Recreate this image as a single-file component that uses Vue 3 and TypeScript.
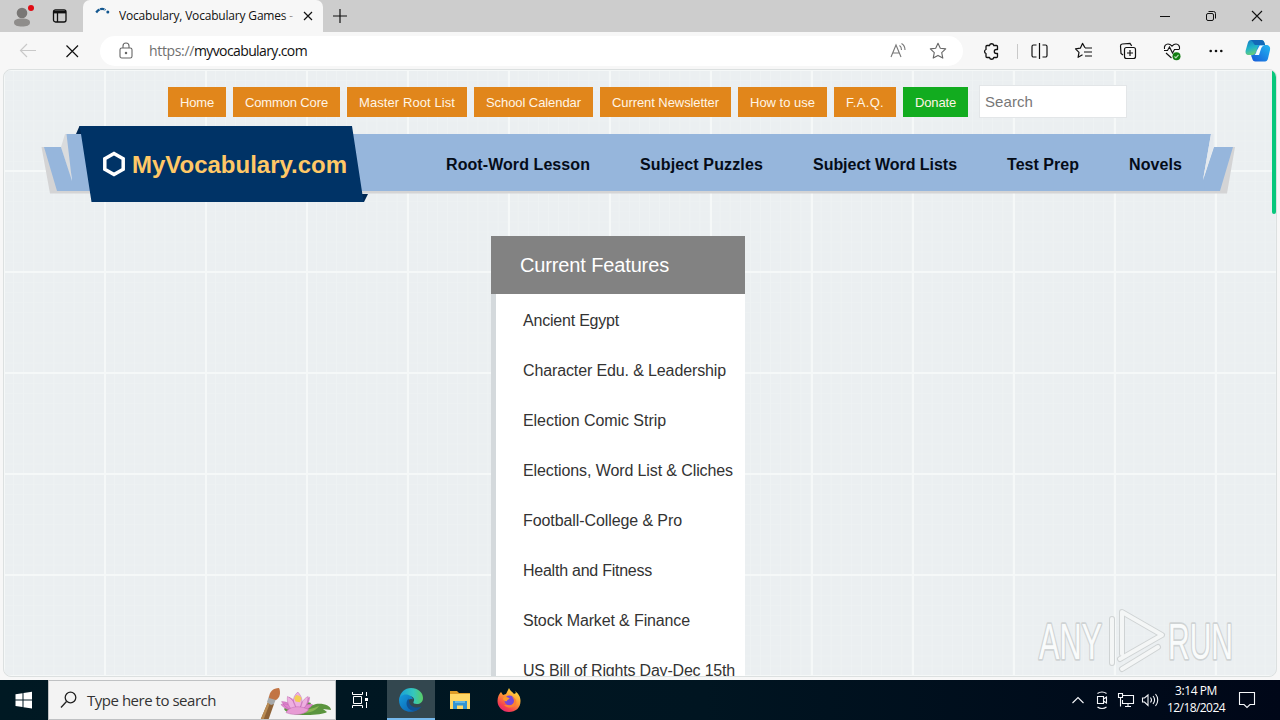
<script setup lang="ts">
import type { Directive } from 'vue'

interface Entry {
  label: string
  width: number
}

/** Spreads a label's letters so that it fills the given width in pixels. */
const vFit: Directive<HTMLElement, number> = {
  mounted(el, binding) {
    const natural = el.getBoundingClientRect().width
    const count = (el.textContent ?? '').length
    if (count > 0) el.style.letterSpacing = `${(binding.value - natural) / count}px`
  },
}

const shortcuts: Entry[] = [
  { label: 'Home', width: 34 },
  { label: 'Common Core', width: 83 },
  { label: 'Master Root List', width: 96 },
  { label: 'School Calendar', width: 95 },
  { label: 'Current Newsletter', width: 107 },
  { label: 'How to use', width: 65 },
  { label: 'F.A.Q.', width: 38 },
  { label: 'Donate', width: 41 },
]

const sections: Entry[] = [
  { label: 'Root-Word Lesson', width: 144 },
  { label: 'Subject Puzzles', width: 123 },
  { label: 'Subject Word Lists', width: 144 },
  { label: 'Test Prep', width: 72 },
  { label: 'Novels', width: 53 },
]

const features: Entry[] = [
  { label: 'Ancient Egypt', width: 96 },
  { label: 'Character Edu. & Leadership', width: 203 },
  { label: 'Election Comic Strip', width: 143 },
  { label: 'Elections, Word List & Cliches', width: 210 },
  { label: 'Football-College & Pro', width: 159 },
  { label: 'Health and Fitness', width: 129 },
  { label: 'Stock Market & Finance', width: 167 },
  { label: 'US Bill of Rights Day-Dec 15th', width: 212 },
]
</script>

<template>
  <div class="screen">
    <header class="tabstrip">
      <div class="corner">
        <svg class="profile" width="24" height="32" viewBox="0 0 24 32">
          <circle cx="12" cy="13" r="5.3" fill="#797775" />
          <path d="M4 22.500c0-3 3-4 8-4s8 1 8 4-3.500 4-8 4-8-1-8-4z" fill="#8f8d8b" />
          <circle cx="21" cy="8" r="3" fill="#e00b14" />
        </svg>
        <svg class="workspace" width="16" height="16" viewBox="0 0 16 16" fill="none" stroke="#111">
          <rect x="1.500" y="1.800" width="12.500" height="12.200" rx="2" stroke-width="1.300" />
          <path d="M1.500 4h12.500" stroke-width="2.800" />
          <path d="M5.500 4v10" stroke-width="1.300" />
        </svg>
      </div>
      <div class="tab">
        <svg class="spinner" width="16" height="16" viewBox="0 0 16 16">
          <path d="M1.200 6.500C4 2.600 7.500 1.900 10.500 4" fill="none" stroke="#12568f" stroke-width="2.200" stroke-dasharray="4.500 .6" />
          <circle cx="12.800" cy="6" r="1.500" fill="#12568f" />
        </svg>
        <span class="tab-title"><span v-fit="174">Vocabulary, Vocabulary Games -</span></span>
        <svg class="tab-close" width="10" height="10" viewBox="0 0 10 10" stroke="#111" stroke-width="1.200"><path d="M1 1l8 8M9 1L1 9" /></svg>
      </div>
      <svg class="new-tab" width="14" height="14" viewBox="0 0 14 14" stroke="#111" stroke-width="1.200"><path d="M7 0v14M0 7h14" /></svg>
      <div class="window-buttons">
        <svg width="46" height="32" viewBox="0 0 46 32" fill="none" stroke="#111"><path d="M18 16.500h10" /></svg>
        <svg width="46" height="32" viewBox="0 0 46 32" fill="none" stroke="#111">
          <rect x="18.500" y="13.500" width="7" height="7" rx="1.500" />
          <path d="M20.500 11.500h5a2 2 0 0 1 2 2v5" />
        </svg>
        <svg width="46" height="32" viewBox="0 0 46 32" fill="none" stroke="#111" stroke-width="1.100"><path d="M18 11l10 10M28 11L18 21" /></svg>
      </div>
    </header>

    <div class="toolbar">
      <svg class="back" width="56" height="36" viewBox="0 0 56 36" fill="none" stroke="#c9c9c9" stroke-width="1.200"><path d="M36 18.500H20.500M27 12l-6.500 6.500L27 25" /></svg>
      <svg class="stop" width="44" height="36" viewBox="0 0 44 36" stroke="#111" stroke-width="1.200"><path d="M10.500 13.500l11.500 11.500M22 13.500L10.500 25" /></svg>
      <div class="address">
        <svg class="lock" width="14" height="18" viewBox="0 0 14 18" fill="none" stroke="#666" stroke-width="1.100">
          <rect x="1" y="6" width="12" height="10" rx="1.800" />
          <path d="M4 6V4a3 3 0 0 1 6 0v2" />
          <circle cx="7" cy="11" r=".7" fill="#666" />
        </svg>
        <span class="url"><span v-fit="45" class="scheme">https://</span><span v-fit="113">myvocabulary.com</span></span>
        <svg class="read" width="18" height="18" viewBox="0 0 18 18" fill="none" stroke="#777" stroke-width="1.100">
          <path d="M2 15L7 3l5 12M4 11h6" />
          <path d="M10.500 3.500c1.500 1 2 2.500 2 4.500M12.500 1.500c2.500 1.500 3.500 3.500 3.500 6.500" />
        </svg>
        <svg class="favourite" width="18" height="18" viewBox="0 0 18 18" fill="none" stroke="#666" stroke-width="1.100" stroke-linejoin="round"><path d="M9 1.300l2.300 5 5.400.6-4 3.700 1.100 5.500L9 13.400l-4.800 2.700 1.100-5.500-4-3.700 5.400-.6z" /></svg>
      </div>
      <div class="actions">
        <svg width="44" height="36" viewBox="0 0 44 36" fill="none" stroke="#111" stroke-width="1.300" stroke-linejoin="round">
          <path d="M19 13.500h2.500a2.200 2.200 0 0 1 4.300 0h2.700a1 1 0 0 1 1 1v3h-1.200a2 2 0 0 0 0 4h1.200v3a1 1 0 0 1-1 1h-2.700a2.200 2.200 0 0 1-4.300 0H19a1 1 0 0 1-1-1v-3a2.100 2.100 0 0 1 0-4v-3a1 1 0 0 1 1-1z" />
        </svg>
        <i class="divider"></i>
        <svg width="44" height="36" viewBox="0 0 44 36" fill="none" stroke="#111" stroke-width="1.200">
          <path d="M21.500 11v16M18.500 13h-3a1.500 1.500 0 0 0-1.500 1.500v9a1.500 1.500 0 0 0 1.500 1.500h3M24.500 13h3a1.500 1.500 0 0 1 1.500 1.500v9a1.500 1.500 0 0 1-1.500 1.500h-3" />
        </svg>
        <svg width="44" height="36" viewBox="0 0 44 36" fill="none" stroke="#111" stroke-width="1.200" stroke-linejoin="round">
          <path d="M23 15.700l-2.500-4.300-2.200 4.800-4.800.6 3.500 3.500-.9 5 4.400-2.500M23 16h7M22 20h8M23 24h7" />
        </svg>
        <svg width="44" height="36" viewBox="0 0 44 36" fill="none" stroke="#111" stroke-width="1.200">
          <path d="M17 23l-2-1.500-.5-7.500a2 2 0 0 1 1.700-2l7.800-.6 1.700 2.500" />
          <rect x="18.500" y="15.500" width="11" height="11" rx="2" />
          <path d="M24 18v6M21 21h6" />
        </svg>
        <svg width="44" height="36" viewBox="0 0 44 36" fill="none" stroke="#111" stroke-width="1.100">
          <path d="M14.500 17c-.6-3 1.200-5 3.500-5 1.800 0 3 1 4 2.200 1-1.200 2.200-2.200 4-2.200 2.300 0 4 2 3.500 5M14 18.500h3.500l2-3.500 3 6 2-3.500h5M16 21l5.500 5" />
          <circle cx="26.500" cy="24.300" r="4" fill="#107c10" stroke="none" />
          <path d="M24.500 24.500l1.400 1.400 2.600-3" stroke="#b9e2b9" />
        </svg>
        <svg width="44" height="36" viewBox="0 0 44 36" fill="#111"><circle cx="16.700" cy="19" r="1.300" /><circle cx="22" cy="19" r="1.300" /><circle cx="27.300" cy="19" r="1.300" /></svg>
        <svg width="42" height="36" viewBox="0 0 42 36">
          <defs>
            <linearGradient id="copA" x1="0" y1="0" x2=".4" y2="1"><stop offset="0" stop-color="#1578c4" /><stop offset=".55" stop-color="#20b4c9" /><stop offset="1" stop-color="#71cf72" /></linearGradient>
            <linearGradient id="copB" x1="1" y1="0" x2="0" y2="1"><stop offset="0" stop-color="#21b8f2" /><stop offset="1" stop-color="#1757d7" /></linearGradient>
          </defs>
          <path d="M13 8h10c2 0 3 1 3.500 3l.7 2.200c-3 0-4.200 1-5 3.500L20 23H11c-3 0-4-2-3.200-5l2-7c.6-2 1.500-3 3.200-3z" fill="url(#copA)" />
          <path d="M27 29.500H17.500c-2 0-2.800-1-3.300-3L13 23.200c3 0 4.500-1.200 5.300-4L20.200 13H28c3 0 4.700 2 4 5l-2 8.500c-.5 2-1.500 3-3 3z" fill="url(#copB)" />
          <path d="M21.700 13.500h4.800c-2.200.5-3 1.500-3.700 4L21 23h-4.700c1.200-.6 1.800-2 2.300-4z" fill="#f8fbff" />
          <path d="M13 8h10c2 0 3 1 3.500 3l.6 2H20c-2.500 0-4 .5-4.700-2.500z" fill="#1268b7" />
        </svg>
      </div>
    </div>

    <main class="page">
      <div class="viewport">
        <nav class="shortcuts">
          <a v-for="item in shortcuts" :key="item.label" :class="{ donate: item.label === 'Donate' }"><span v-fit="item.width">{{ item.label }}</span></a>
          <div class="search"><span v-fit="48">Search</span></div>
        </nav>

        <div class="ribbon">
          <svg class="ribbon-shape" width="1200" height="80" viewBox="40 124 1200 80">
            <path d="M41.500 147H50l10 44h1158l13-44h4l-8 46.500H50z" fill="#d4d4d5" />
            <path d="M65 134h6v46l-10-33z" fill="#d9dbdd" />
            <path d="M44 147h17l11 34-5.500-47H1211l-8 46 11-33h19l-13 44H57z" fill="#96b6dc" />
            <path d="M1211 134l2.500 0 0 13-10.500 33z" fill="#e4e9ee" />
            <path d="M76 134l3.500-8H100v8z" fill="#002853" />
            <path d="M361 194h7l-4 8h-8z" fill="#002853" />
            <path d="M79.500 126H352l10.500 69 1.500 7H91.500L81 134z" fill="#003366" />
          </svg>
          <div class="brand">
            <svg width="24" height="26" viewBox="0 0 24 26" fill="none" stroke="#fff" stroke-width="3.500"><path d="M12 2.500l9.200 5.300v10.400L12 23.500l-9.200-5.300V7.800z" /></svg>
            <span v-fit="215">MyVocabulary.com</span>
          </div>
          <nav class="sections">
            <a v-for="item in sections" :key="item.label" v-fit="item.width">{{ item.label }}</a>
          </nav>
        </div>

        <aside class="features">
          <h2><span v-fit="149">Current Features</span></h2>
          <ul>
            <li v-for="item in features" :key="item.label"><span v-fit="item.width">{{ item.label }}</span></li>
          </ul>
        </aside>
        <i class="progress"></i>
        <svg class="watermark" width="216" height="72" viewBox="1034 605 216 72">
          <g font-family="'Liberation Sans',Arial,sans-serif" font-size="50" fill="#f9fbfb" stroke-linejoin="round">
            <g stroke="#cfd3d4" stroke-width="3.500">
              <text x="1039" y="659" textLength="63" lengthAdjust="spacingAndGlyphs" paint-order="stroke">ANY</text>
              <text x="1168" y="659" textLength="65" lengthAdjust="spacingAndGlyphs" paint-order="stroke">RUN</text>
            </g>
          </g>
          <g fill="none" stroke-linejoin="round" stroke-linecap="round">
            <path d="M1112 619v44M1122 654v-42l40 23-42 24M1122 669l36-22" stroke="#cfd3d4" stroke-width="6" />
            <path d="M1112 619v44M1122 654v-42l40 23-42 24M1122 669l36-22" stroke="#f4f6f6" stroke-width="4" />
          </g>
        </svg>
      </div>
    </main>

    <footer class="taskbar">
      <svg class="start" width="48" height="40" viewBox="0 0 48 40" fill="#fff"><path d="M15.500 14.200l7-1v6.400h-7zM23.500 13l8.500-1.200v7.800h-8.500zM15.500 20.600h7V27l-7-1zM23.500 20.600H32v7.800l-8.500-1.200z" /></svg>
      <div class="task-search">
        <svg class="magnifier" width="18" height="18" viewBox="0 0 18 18" fill="none" stroke="#222" stroke-width="1.300"><circle cx="10.500" cy="6.500" r="5.300" /><path d="M6.500 10.500L1 16.500" /></svg>
        <span v-fit="129">Type here to search</span>
        <svg class="lotus" width="76" height="38" viewBox="259 681 76 38">
          <path d="M260 721l8-19 6 2-6 17z" fill="#8d6237" />
          <path d="M260 721l8-19 2 1-7 18z" fill="#b98b53" />
          <path d="M267 702l2-6 7 3-2 5-3 1z" fill="#a6a9aa" />
          <path d="M269 698c0-6 4-10 10-10 2 4 1 10-3 12z" fill="#c27444" />
          <path d="M284 709c3-5 19-9 27-6l-1 3 6-2c8-1 15 2 15 6l-8-1 4 3c-6 4-40 5-43-3z" fill="#5a943e" />
          <path d="M286 710c12 2 27-1 33-4-3 6-14 8-26 8z" fill="#86b552" />
          <g transform="translate(79.500 189.300) scale(.735)">
            <g fill="#df85cd" stroke="#b85caa" stroke-width=".6">
              <path d="M292 708c-9 2-14-3-18-7 7-2 13 0 18 7zM298 708c-9-5-13-10-13-17 7 3 12 8 13 17zM299 708c1-8 7-13 14-17 0 8-5 13-14 17zM293 709c-9-1-15-6-18-12 8 0 15 4 18 12zM298 708c4-6 12-8 19-7-4 7-11 9-19 7z" />
              <path d="M298 708c-9-7-9-17-1-24 7 7 8 17 1 24zM292 710c-8-5-10-13-9-20 6 3 12 10 12 20zM300 710c0-8 3-16 11-20 0 9-3 15-11 20z" fill="#eeafe0" />
              <path d="M281 712c3-6 10-8 16-8 6 0 11 2 15 4-7 8-21 8-31 4z" fill="#e79bd4" />
            </g>
            <path d="M292 692l3-4 4 1 3 3-2 6-6-1z" fill="#f2ce54" />
          </g>
        </svg>
      </div>
      <svg class="task" width="48" height="40" viewBox="0 0 48 40" fill="none" stroke="#fff"><path d="M16.500 12v2.500h10V12M16.500 28v-2.500h10V28M17.500 16.500h8v7h-8zM30.500 12v4M30.500 22v6" /><path d="M29 19.500h3" stroke-width="3" /></svg>
      <div class="task active">
        <svg width="24" height="24" viewBox="0 0 24 24">
          <defs>
            <linearGradient id="edgeTop"><stop stop-color="#179fd9" /><stop offset=".6" stop-color="#35c7bd" /><stop offset="1" stop-color="#59cd65" /></linearGradient>
            <linearGradient id="edgeLow" x1="0" x2="1" y1="0" y2="1"><stop stop-color="#159bdb" /><stop offset="1" stop-color="#0b5cae" /></linearGradient>
          </defs>
          <path d="M.3 11C1 4.500 6 0 12 0c7 0 12 4.500 12 10 0 4-3 6-6 6-3 0-4-1-3.500-2 1-1.500 1.500-5.500-4.500-6C5 7.500 1 9 .3 11z" fill="url(#edgeTop)" />
          <path d="M0 12c.2-4 5-6.500 9.500-5 2.500.8 4 2.500 4.500 4.500C10 9.500 7 14 9 18c1.500 3.500 6 5 10 3.500C12 26.500 0 23.500 0 12z" fill="url(#edgeLow)" />
          <path d="M9.500 10.500C5.500 15 8 21 13 22.500c4 1 7-.5 9.500-4-4 2-9 1-11-1.500-1.500-2-1.500-4.500-2-6.500z" fill="#115193" />
        </svg>
      </div>
      <div class="task">
        <svg width="24" height="24" viewBox="0 0 24 24">
          <path d="M2 3h7l2 2h11v6H2z" fill="#dd9c27" /><path d="M2 6h20v15H2z" fill="#ffd766" /><path d="M5 13h14v8h-4v-3.500H9V21H5z" fill="#3494d2" /><path d="M7 13h10v2H7z" fill="#65b7e4" />
        </svg>
      </div>
      <div class="task">
        <svg width="26" height="26" viewBox="0 0 26 26">
          <defs><linearGradient id="fox" x1=".8" y1="0" x2=".2" y2="1"><stop stop-color="#ffe943" /><stop offset=".45" stop-color="#ff9632" /><stop offset=".8" stop-color="#f43d51" /><stop offset="1" stop-color="#dc247b" /></linearGradient></defs>
          <path d="M5 5l2 3 3-1 3-6c1 3 4 4 5 6l2-1-1-2c4 3 5.500 6 5.500 10 0 7-5 11-11.500 11S1.500 20 1.500 14C1.500 10 3 7 5 5z" fill="url(#fox)" />
          <circle cx="13.500" cy="13.500" r="5" fill="#7647d8" /><path d="M7 11c3-2 5-1 7 1-2 0-3 1-3 2-2 1-4-1-4-3z" fill="#ff9a29" />
          <path d="M12 18c3 1 6-1 6-4 0-2-1-3-2-4 4 1 5 4 4 7-2 4-8 5-12 1z" fill="#fd8130" />
        </svg>
      </div>
      <div class="tray">
        <svg width="24" height="24" viewBox="0 0 24 24"><path d="M6.500 15l5.500-5.500 5.500 5.500" /></svg>
        <svg width="24" height="24" viewBox="0 0 24 24"><path d="M7.500 5.500c2.500-2 6.500-2 9 0M7.500 19c2.500 2 6.500 2 9 0M7.500 8.500h6v7h-6zM13.500 11l3-2v6l-3-2" /></svg>
        <svg width="24" height="24" viewBox="0 0 24 24"><path d="M9 7.500h10.500v8H8.500V12M4.500 5.500h4v4h-4zM6.500 9.500v9M11 18.500h6M14 15.500v3" /></svg>
        <svg width="24" height="24" viewBox="0 0 24 24"><path d="M4.500 10h2l3.500-3v10.500L6.500 14h-2zM12.500 9.500c1.200 1.500 1.200 3.500 0 5M15 8c2 2.500 2 5.500 0 8M17.500 6c3 3.500 3 8.500 0 12" /></svg>
        <div class="clock"><span v-fit="42">3:14 PM</span><span v-fit="58">12/18/2024</span></div>
        <svg class="notice" width="46" height="24" viewBox="0 0 46 24"><path d="M15.500 4.500h15v12h-4.500l-3 3-3-3h-4.500z" /></svg>
      </div>
    </footer>
  </div>
</template>

<style>
body { margin: 0; overflow: hidden; }
</style>

<style scoped>
.screen { width: 1280px; height: 720px; display: flex; flex-direction: column; overflow: hidden; background: #f7f7f7; font-family: "Liberation Sans", Arial, sans-serif; }
svg { display: block; flex: none; }
span, a { white-space: nowrap; }

.tabstrip { height: 32px; flex: none; display: flex; background: #cdcdcd; font-family: "Open Sans", "Noto Sans", sans-serif; }
.corner { width: 83px; box-sizing: border-box; display: flex; padding-left: 10px; border-radius: 0 0 5px 0; }
.workspace { margin: 8px 0 0 18px; }
.tab { width: 240px; box-sizing: border-box; display: flex; align-items: center; padding-left: 12px; background: #f7f7f7; border-radius: 7px 7px 0 0; }
.spinner { margin-bottom: 4px; }
.tab-title { position: relative; width: 178px; margin-left: 8px; overflow: hidden; font-size: 12px; line-height: 18px; color: #111; }
.tab-title::after { content: ""; position: absolute; inset: 0 0 0 auto; width: 14px; background: linear-gradient(90deg, #f7f7f700, #f7f7f7); }
.tab-close { margin-left: 6px; }
.new-tab { margin: 9px 0 0 10px; }
.window-buttons { display: flex; margin-left: auto; }

.toolbar { height: 36px; flex: none; display: flex; align-items: center; background: #f7f7f7; font-family: "Open Sans", "Noto Sans", sans-serif; }
.address { width: 864px; height: 30px; margin-top: 2px; box-sizing: border-box; display: flex; align-items: center; padding: 0 16px 0 19px; border-radius: 15px; background: #fff; }
.url { display: flex; margin-left: 16px; font-size: 14px; line-height: 20px; color: #111; }
.scheme { color: #707070; }
.read { margin-left: auto; }
.favourite { margin-left: 22px; }
.actions { display: flex; align-items: center; margin-left: 5px; }
.divider { width: 1px; height: 15px; margin: 3px 0 0 5px; background: #c9c9c9; }

.page { flex: 1; min-height: 0; box-sizing: border-box; padding: 1px 3px 3px; background: #f7f7f7; }
.viewport {
  position: relative; height: 608px; box-sizing: border-box; display: flex; flex-direction: column; overflow: hidden;
  border: 1px solid #dce0e0; border-radius: 8px; background-color: #ebeff1;
  background-image:
    linear-gradient(90deg, #f5f8f8 2px, transparent 2px),
    linear-gradient(#f5f8f8 2px, transparent 2px),
    linear-gradient(90deg, #eef2f3 1px, transparent 1px),
    linear-gradient(#edf1f2 1px, transparent 1px);
  background-size: 101px 101px, 101px 101px, 10.1px 10.1px, 10.1px 10.1px;
  background-position: -1px 0, 0 -1px, -1px 0, 0 0;
}
.shortcuts { flex: none; height: 33px; display: flex; align-items: center; gap: 7px; margin: 15px 0 0 164px; font-size: 13px; }
.shortcuts a { box-sizing: border-box; height: 30px; padding: 0 12px; line-height: 31px; background: #e1861b; color: #fff5e6; }
.shortcuts .donate { background: #12ac1f; }
.search { width: 148px; height: 33px; box-sizing: border-box; margin-left: 4px; padding-left: 5px; border: 1px solid #e3e6e8; background: #fff; color: #777; font-size: 15px; line-height: 32px; }

.ribbon { position: relative; flex: none; height: 80px; display: flex; align-items: center; margin: 6px 0 0 36px; }
.ribbon-shape { position: absolute; left: 0; top: 0; }
.brand { position: relative; width: 344px; box-sizing: border-box; display: flex; align-items: center; gap: 6px; padding-left: 62px; color: #ffc866; font-size: 24px; font-weight: bold; line-height: 28px; }
.brand span { padding-top: 2px; }
.sections { position: relative; display: flex; gap: 50px; margin: 2px 0 0 62px; font-size: 16px; font-weight: bold; line-height: 20px; color: #050c18; }

.features { width: 254px; flex: none; margin: 32px 0 0 487px; }
.features h2 { height: 58px; box-sizing: border-box; margin: 0; padding-left: 29px; background: #828282; color: #fff; font-size: 20px; font-weight: normal; line-height: 58px; }
.features ul { margin: 0; padding: 2px 0 0 27px; border-left: 5px solid #d4d9dc; background: #fff; list-style: none; }
.features li { height: 50px; color: #333; font-size: 16px; line-height: 50px; }
.progress { position: absolute; right: 0; top: 1px; width: 4px; height: 143px; border-radius: 0 5px 3px 3px; background: #08c77c; }
.watermark { position: absolute; left: 1030px; top: 535px; }

.taskbar { flex: none; height: 40px; display: flex; background: linear-gradient(90deg, #001923, #001521 55%, #000718); font-family: "Open Sans", "Noto Sans", sans-serif; }
.task-search { width: 288px; height: 40px; box-sizing: border-box; display: flex; align-items: center; border: 1px solid #bfc1c3; background: #f3f3f3; color: #333; font-size: 15px; }
.magnifier { margin: 0 9px 0 11px; }
.lotus { margin-left: auto; }
.task { width: 48px; height: 40px; display: flex; align-items: center; justify-content: center; margin-right: 1px; }
.active { box-sizing: border-box; margin-left: 2px; margin-right: 1px; padding-top: 2px; border-bottom: 2px solid #75b9ed; background: #33474f; }
.tray { display: flex; align-items: center; margin-left: auto; color: #fff; }
.tray svg { fill: none; stroke: #f5f7fa; stroke-width: 1.1; }
.clock { width: 64px; display: flex; flex-direction: column; align-items: center; font-size: 12px; line-height: 17px; margin: -2px -1px 0 1px; }
.tray > svg:nth-child(-n + 4) { position: relative; }
.tray .notice { margin: 0 10px 0 -1px; }
.tray { padding-left: 6px; }
.tray .clock { margin-right: -2px; }
.tray .clock { transform: translateX(1px); }
</style>
